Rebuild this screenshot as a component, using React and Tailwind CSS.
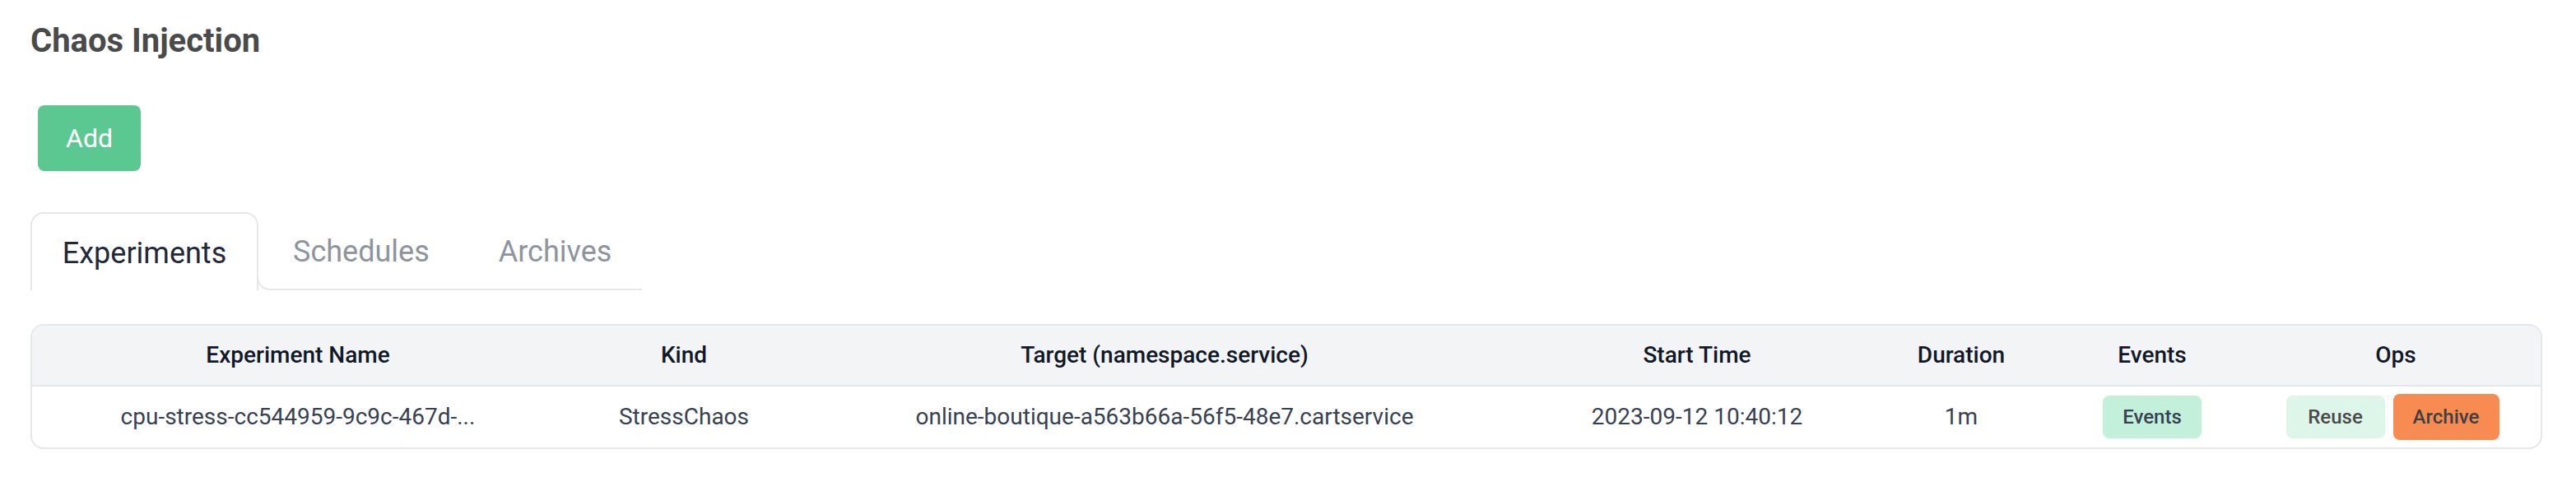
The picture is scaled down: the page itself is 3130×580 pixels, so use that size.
import React from "react";

const columns = [
  "Experiment Name",
  "Kind",
  "Target (namespace.service)",
  "Start Time",
  "Duration",
  "Events",
  "Ops",
];

const experiments = [
  {
    name: "cpu-stress-cc544959-9c9c-467d-...",
    kind: "StressChaos",
    target: "online-boutique-a563b66a-56f5-48e7.cartservice",
    start: "2023-09-12 10:40:12",
    duration: "1m",
  },
];

function Tabs() {
  return (
    <div className="mt-[50px] flex h-[95px]">
      <div className="flex w-[277px] items-center justify-center rounded-t-[16px] border-2 border-b-0 border-[#e5e7eb] pt-[2px] text-[36px] leading-[36px] text-[#1f2937]">
        Experiments
      </div>
      <div className="-ml-[2px] h-[24px] w-[18px] self-end rounded-bl-[16px] border-b-2 border-l-2 border-[#e5e7eb]" />
      <div className="flex w-[450px] items-center border-b-2 border-[#e5e7eb] pt-[2px] text-[36px] leading-[36px] text-[#8e949c]">
        <span className="pl-[26px]">Schedules</span>
        <span className="pl-[84px]">Archives</span>
      </div>
    </div>
  );
}

function ExperimentsTable() {
  const grid = "grid grid-cols-[646px_292px_876px_418px_224px_240px_1fr] items-center";
  return (
    <div className="mt-[41px] overflow-hidden rounded-[16px] border-2 border-[#e5e7eb]">
      <div className={`${grid} h-[74px] border-b-2 border-[#e5e7eb] bg-[#f3f4f6] text-[28px] leading-[28px] font-medium text-[#111827]`}>
        {columns.map((col) => (
          <div key={col} className="text-center">
            {col}
          </div>
        ))}
      </div>
      {experiments.map((exp) => (
        <div key={exp.name} className={`${grid} h-[74px] text-[28px] leading-[28px] text-[#374151]`}>
          <div className="text-center">{exp.name}</div>
          <div className="text-center">{exp.kind}</div>
          <div className="text-center">{exp.target}</div>
          <div className="text-center">{exp.start}</div>
          <div className="text-center">{exp.duration}</div>
          <div className="flex justify-center">
            <button className="h-[52px] w-[120px] rounded-[8px] bg-[#c2f0da] text-[24px] font-medium text-[#374151]">
              Events
            </button>
          </div>
          <div className="flex items-center justify-center gap-[10px] pr-[8px]">
            <button className="h-[52px] w-[120px] rounded-[8px] bg-[#ddf6e9] text-[24px] font-medium text-[#4a4a4a]">
              Reuse
            </button>
            <button className="h-[56px] w-[129px] rounded-[8px] bg-[#f78b52] text-[24px] font-medium text-[#404040]">
              Archive
            </button>
          </div>
        </div>
      ))}
    </div>
  );
}

export default function App() {
  return (
    <div className="min-h-[580px] bg-white pl-[37px] pr-[41px] pt-[30px] font-['Roboto',sans-serif]">
      <h1 className="text-[40px] leading-[40px] font-bold text-[#4a4a4a]">Chaos Injection</h1>
      <button className="mt-[58px] ml-[9px] block h-[80px] w-[125px] rounded-[8px] bg-[#5cc891] text-[32px] leading-[32px] text-white">
        Add
      </button>
      <Tabs />
      <ExperimentsTable />
    </div>
  );
}
